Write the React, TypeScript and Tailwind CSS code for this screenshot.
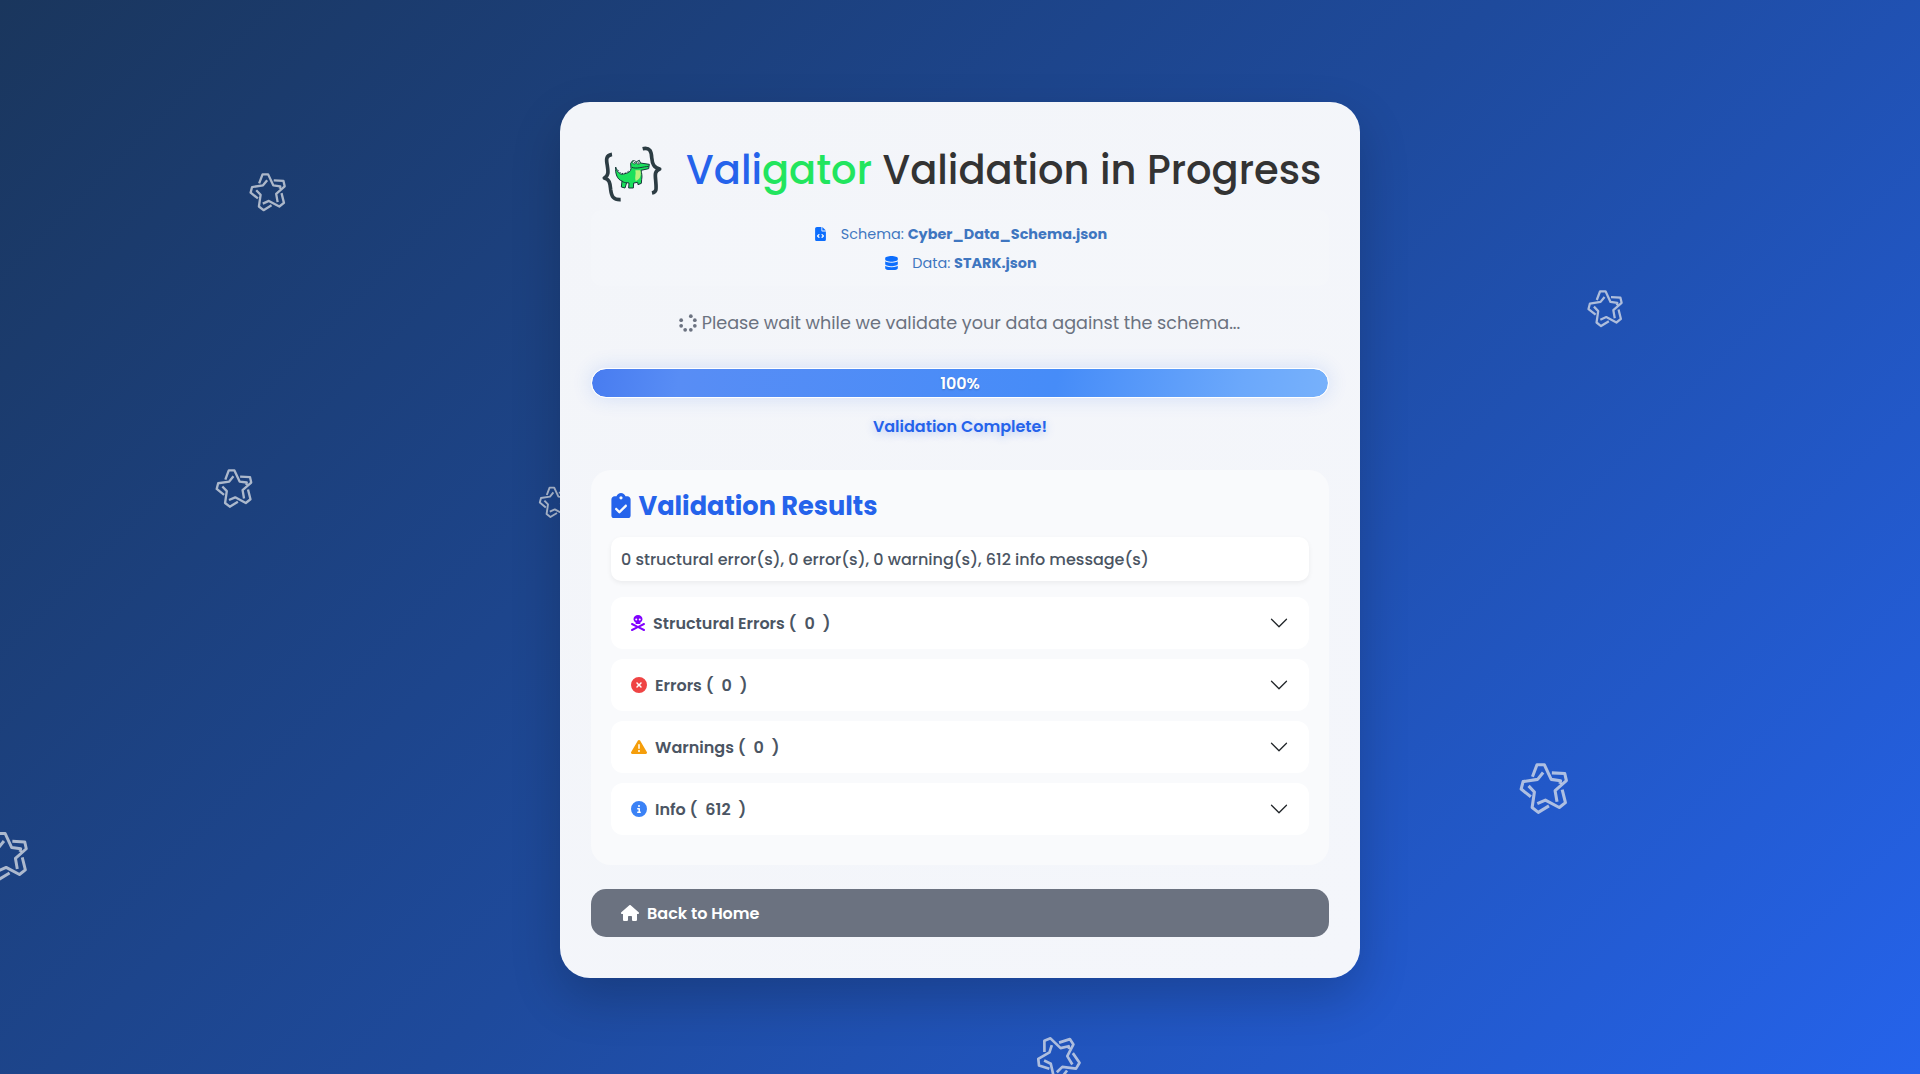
import type { ReactNode } from "react";
import {
  FaCircleInfo,
  FaCircleXmark,
  FaClipboardCheck,
  FaDatabase,
  FaFileCode,
  FaHouse,
  FaSkullCrossbones,
  FaTriangleExclamation,
} from "react-icons/fa6";

type StarSpec = { x: number; y: number; scale: number; turn: number };

const stars: StarSpec[] = [
  { x: 268.3, y: 192.2, scale: 0.73, turn: 0 },
  { x: 1605, y: 308.6, scale: 0.71, turn: 0 },
  { x: 233.7, y: 488, scale: 0.74, turn: 0 },
  { x: 553.5, y: 502, scale: 0.6, turn: 0 },
  { x: 1544.3, y: 788.5, scale: 0.97, turn: 0 },
  { x: 5, y: 856, scale: 0.93, turn: 0 },
  { x: 1057.8, y: 1057.3, scale: 0.85, turn: -21 },
];

function Star({ x, y, scale, turn }: StarSpec) {
  const size = 60 * scale;
  return (
    <svg
      className="absolute"
      style={{ left: x - size / 2, top: y - size / 2, width: size, height: size, transform: `rotate(${turn}deg)` }}
      viewBox="-90 -90 180 180"
      fill="none"
      stroke="#e5e7eb"
      strokeOpacity="0.72"
      strokeWidth="9.5"
      strokeLinejoin="round"
    >
      <path d="M-36-35-22-72H1L22-27 51-23 49-13" />
      <path d="M24-47 64-45 69-23 34 8 40 42" />
      <path d="M56 5 66 45 47 60 4 37-21 48" />
      <path d="M15 55-18 75-37 60-30 12-48-7" />
      <path d="M-41 27-71 3-65-20-20-27-3-48" />
    </svg>
  );
}

function Logo() {
  return (
    <svg className="h-[80px] w-[90px] shrink-0" viewBox="0 0 270 240" fill="none">
      <g stroke="#2c3c43" strokeWidth="11" strokeLinejoin="round">
        <path d="M66 73C46 76 49 91 52 107 55 126 56 136 43 144 60 149 60 161 62 179 65 200 70 210 92 209" />
        <path d="M158 56C181 51 184 66 185 82 187 102 191 113 209 117 194 123 195 134 197 151 199 177 201 186 186 189" />
      </g>
      <g stroke="#16383a" strokeWidth="3" strokeLinejoin="round">
        <path
          fill="#1be05c"
          d="M77 111C75 131 82 149 96 153L94 171 105 174 110 158 117 159 116 174 130 174 131 159 143 157 144 164 154 160 155 148C157 139 155 129 153 121L176 116 178 103 151 99 148 91 139 96 128 92 122 100 123 116C122 125 116 128 105 131 92 136 83 130 77 111Z"
        />
        <path d="M126 112C138 118 160 110 176 109M96 153C101 158 107 158 110 158" />
        <path strokeDasharray="4 5" d="M83 119 93 131 107 129 120 121" />
      </g>
      <path fill="#b9f27c" d="M136 121 151 121C155 135 151 149 137 153 133 142 139 132 136 121Z" />
      <g fill="#fff" stroke="#16383a" strokeWidth="2">
        <ellipse cx="133" cy="97" rx="5" ry="5" />
        <ellipse cx="145" cy="98" rx="5" ry="5" />
      </g>
      <g fill="#16383a">
        <circle cx="134" cy="98" r="2" />
        <circle cx="145" cy="99" r="2" />
      </g>
    </svg>
  );
}

const spinnerAngles = [-67.5, -22.5, 22.5, 67.5, 112.5, 157.5, 202.5];

function Spinner() {
  return (
    <svg className="mr-[5px] size-[18px]" viewBox="-9 -9 18 18" fill="#6b7280">
      {spinnerAngles.map((a) => (
        <circle
          key={a}
          cx={7.4 * Math.cos((a * Math.PI) / 180)}
          cy={7.4 * Math.sin((a * Math.PI) / 180)}
          r={1.85}
        />
      ))}
    </svg>
  );
}

function Section({ icon, label, count }: { icon: ReactNode; label: string; count: number }) {
  return (
    <button className="flex h-[52px] w-full items-center rounded-xl bg-white px-5 text-base leading-6 font-semibold text-[#4b5563]">
      {icon}
      <span className="ml-2 pt-0.5">{label} (</span>
      <span className="px-2 pt-0.5">{count}</span>
      <span className="pt-0.5">)</span>
      <svg className="ml-auto size-5" viewBox="0 0 16 16" fill="#212529">
        <path
          fillRule="evenodd"
          d="M1.646 4.646a.5.5 0 0 1 .708 0L8 10.293l5.646-5.647a.5.5 0 0 1 .708.708l-6 6a.5.5 0 0 1-.708 0l-6-6a.5.5 0 0 1 0-.708z"
        />
      </svg>
    </button>
  );
}

export default function App() {
  return (
    <div className="relative flex h-[1074px] w-full items-start justify-center overflow-hidden bg-[linear-gradient(135deg,#1a365d_0%,#1e4a9c_50%,#2563eb_100%)] pt-[102px] font-['Poppins','Inter',sans-serif]">
      {stars.map((s) => (
        <Star key={`${s.x}-${s.y}`} {...s} />
      ))}

      <main className="relative flex h-[876px] w-[800px] flex-col rounded-[30px] bg-[linear-gradient(135deg,#f3f5f9,#f4f6fb)] px-[31px] pt-11 shadow-[0_20px_50px_rgba(0,0,0,0.2)]">
        <h1 className="flex h-12 items-center text-[40px] leading-[48px] font-medium whitespace-nowrap text-[#333]">
          <div className="-mr-[8px] -ml-px flex h-12 shrink-0 items-center">
            <Logo />
          </div>
          <span className="ml-[14px]">
            <span className="text-[#2563eb]">Vali</span>
            <span className="text-[#22e55e]">gator</span> Validation in Progress
          </span>
        </h1>

        <div className="mt-4 h-[76px] rounded-[10px] bg-white/15 pt-[9.5px] text-[14.4px] text-[#3f76c0]">
          <p className="flex h-[29px] items-center justify-center pl-[2px]">
            <FaFileCode className="mr-[15px] w-[11px] text-[#0d6efd]" />
            <span className="pt-0.5">
              Schema: <b className="font-bold">Cyber_Data_Schema.json</b>
            </span>
          </p>
          <p className="flex h-[29px] items-center justify-center pl-[2px]">
            <FaDatabase className="mr-[14px] w-[13px] text-[#0d6efd]" />
            <span className="pt-0.5">
              Data: <b className="font-bold">STARK.json</b>
            </span>
          </p>
        </div>

        <p className="mt-6 flex h-[26px] items-center justify-center pr-px text-[17.6px] text-[#6b7280]">
          <Spinner />
          Please wait while we validate your data against the schema...
        </p>

        <div className="mt-8 flex h-[30px] items-center justify-center rounded-[15px] border border-white bg-[linear-gradient(100deg,#487cf0_0%,#588df5_12%,#468cf8_63%,#6ba8fb_88%,#77b1fb_100%)] bg-clip-padding shadow-[0_0_20px_rgba(37,99,235,0.16)]">
          <span className="pt-0.5 text-base leading-6 font-semibold text-white [text-shadow:0_1px_2px_rgba(0,0,0,0.2)]">
            100%
          </span>
        </div>
        <p className="mt-[17px] mb-[31px] text-center text-base leading-6 font-semibold text-[#2563eb] [text-shadow:0_2px_10px_rgba(37,99,235,0.3)]">
          Validation Complete!
        </p>

        <section className="h-[395px] rounded-[20px] bg-[#f9fafc] px-5 pt-5">
          <h2 className="flex h-[31px] items-center text-[25.6px] leading-[31px] font-bold text-[#2563eb]">
            <FaClipboardCheck className="mr-[7.5px] w-5" />
            <span className="pt-0.5">Validation Results</span>
          </h2>
          <p className="mt-4 flex h-11 items-center rounded-[10px] bg-white px-[10px] pt-0.5 text-base leading-6 font-medium text-[#4b5563] shadow-[0_2px_5px_rgba(0,0,0,0.06)]">
            0 structural error(s), 0 error(s), 0 warning(s), 612 info message(s)
          </p>
          <div className="mt-4 flex flex-col gap-[10px]">
            <Section icon={<FaSkullCrossbones className="w-[14px] text-[#8000ff]" />} label="Structural Errors" count={0} />
            <Section icon={<FaCircleXmark className="text-[#ef4444]" />} label="Errors" count={0} />
            <Section icon={<FaTriangleExclamation className="text-[#f59e0b]" />} label="Warnings" count={0} />
            <Section icon={<FaCircleInfo className="text-[#3b82f6]" />} label="Info" count={612} />
          </div>
        </section>

        <button className="mt-6 flex h-12 items-center rounded-[15px] bg-[#6b7280] px-[30px] text-base leading-6 font-semibold text-white">
          <FaHouse className="mr-2 h-4 w-[18px]" />
          <span className="pt-0.5">Back to Home</span>
        </button>
      </main>
    </div>
  );
}
